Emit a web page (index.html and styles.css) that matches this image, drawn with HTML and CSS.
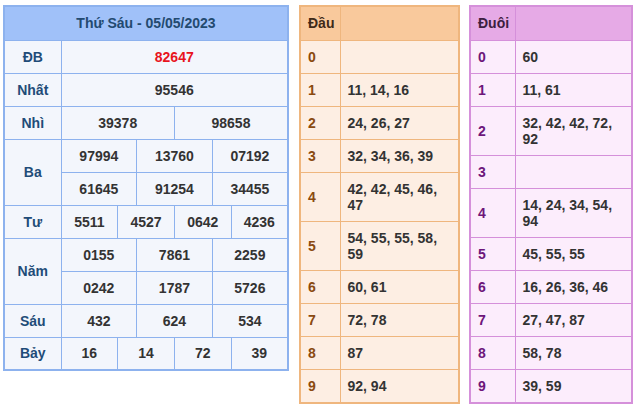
FILE: index.html
```html
<!DOCTYPE html>
<html lang="vi">
<head>
<meta charset="utf-8">
<link rel="stylesheet" href="styles.css">
</head>
<body>
<div class="wrap">
  <table class="kq">
    <colgroup>
      <col class="c-label">
      <col><col><col><col><col><col><col><col><col><col><col><col>
    </colgroup>
    <tr class="head"><th colspan="13">Thứ Sáu - 05/05/2023</th></tr>
    <tr><td class="lb">ĐB</td><td colspan="12" class="red">82647</td></tr>
    <tr><td class="lb">Nhất</td><td colspan="12">95546</td></tr>
    <tr><td class="lb">Nhì</td><td colspan="6">39378</td><td colspan="6">98658</td></tr>
    <tr><td class="lb" rowspan="2">Ba</td><td colspan="4">97994</td><td colspan="4">13760</td><td colspan="4">07192</td></tr>
    <tr><td colspan="4">61645</td><td colspan="4">91254</td><td colspan="4">34455</td></tr>
    <tr><td class="lb">Tư</td><td colspan="3">5511</td><td colspan="3">4527</td><td colspan="3">0642</td><td colspan="3">4236</td></tr>
    <tr><td class="lb" rowspan="2">Năm</td><td colspan="4">0155</td><td colspan="4">7861</td><td colspan="4">2259</td></tr>
    <tr><td colspan="4">0242</td><td colspan="4">1787</td><td colspan="4">5726</td></tr>
    <tr><td class="lb">Sáu</td><td colspan="4">432</td><td colspan="4">624</td><td colspan="4">534</td></tr>
    <tr><td class="lb">Bảy</td><td colspan="3">16</td><td colspan="3">14</td><td colspan="3">72</td><td colspan="3">39</td></tr>
  </table>

  <table class="lt dau">
    <colgroup><col class="c-d1"><col></colgroup>
    <tr class="head"><th>Đầu</th><th></th></tr>
    <tr><td class="dg">0</td><td></td></tr>
    <tr><td class="dg">1</td><td>11, 14, 16</td></tr>
    <tr><td class="dg">2</td><td>24, 26, 27</td></tr>
    <tr><td class="dg">3</td><td>32, 34, 36, 39</td></tr>
    <tr><td class="dg">4</td><td>42, 42, 45, 46, 47</td></tr>
    <tr><td class="dg">5</td><td>54, 55, 55, 58, 59</td></tr>
    <tr><td class="dg">6</td><td>60, 61</td></tr>
    <tr><td class="dg">7</td><td>72, 78</td></tr>
    <tr><td class="dg">8</td><td>87</td></tr>
    <tr><td class="dg">9</td><td>92, 94</td></tr>
  </table>

  <table class="lt duoi">
    <colgroup><col class="c-d2"><col></colgroup>
    <tr class="head"><th>Đuôi</th><th></th></tr>
    <tr><td class="dg">0</td><td>60</td></tr>
    <tr><td class="dg">1</td><td>11, 61</td></tr>
    <tr><td class="dg">2</td><td>32, 42, 42, 72, 92</td></tr>
    <tr><td class="dg">3</td><td></td></tr>
    <tr><td class="dg">4</td><td>14, 24, 34, 54, 94</td></tr>
    <tr><td class="dg">5</td><td>45, 55, 55</td></tr>
    <tr><td class="dg">6</td><td>16, 26, 36, 46</td></tr>
    <tr><td class="dg">7</td><td>27, 47, 87</td></tr>
    <tr><td class="dg">8</td><td>58, 78</td></tr>
    <tr><td class="dg">9</td><td>39, 59</td></tr>
  </table>
</div>
</body>
</html>
```

FILE: styles.css
```css
html, body {
  margin: 0;
  padding: 0;
  background: #ffffff;
}
body {
  font-family: "Liberation Sans", Arial, sans-serif;
  font-size: 14px;
  font-weight: bold;
  color: #333333;
}
.wrap {
  display: flex;
  align-items: flex-start;
  padding: 5px 0 0 3px;
}
table {
  border-collapse: collapse;
  table-layout: fixed;
}
th, td {
  padding: 0;
  line-height: 16px;
  font-weight: bold;
}
tr { height: 33px; }
tr.head { height: 34px; }

/* left results table */
.kq {
  width: 286px;
  border: 2px solid #8db2ee;
  background: #f3f6fc;
}
.kq .c-label { width: 57px; }
.kq th, .kq td {
  border: 1px solid #8db2ee;
  text-align: center;
}
.kq .head th {
  background: #a0c1f9;
  color: #234a70;
  font-weight: bold;
}
.kq .lb { color: #1f4c78; }
.kq .red { color: #e8141c; }

/* loto tables */
.lt th, .lt td {
  text-align: left;
  padding: 8px 7px 8px 7px;
}
.lt .head th { padding-top: 8px; padding-bottom: 8px; }
.dau {
  margin-left: 10px;
  width: 161px;
  border: 2px solid #efb67e;
  background: #fdeee3;
}
.dau th, .dau td { border: 1px solid #efb67e; }
.dau .head th { background: #f9c99c; color: #3f2a18; }
.dau .dg { color: #8a4a10; }
.c-d1 { width: 40px; }

.duoi {
  margin-left: 9px;
  width: 164px;
  border: 2px solid #d590da;
  background: #fcedfc;
}
.duoi th, .duoi td { border: 1px solid #d590da; }
.duoi .head th { background: #e6aae6; color: #3d2040; }
.duoi .dg { color: #6d167a; }
.c-d2 { width: 45px; }
```
